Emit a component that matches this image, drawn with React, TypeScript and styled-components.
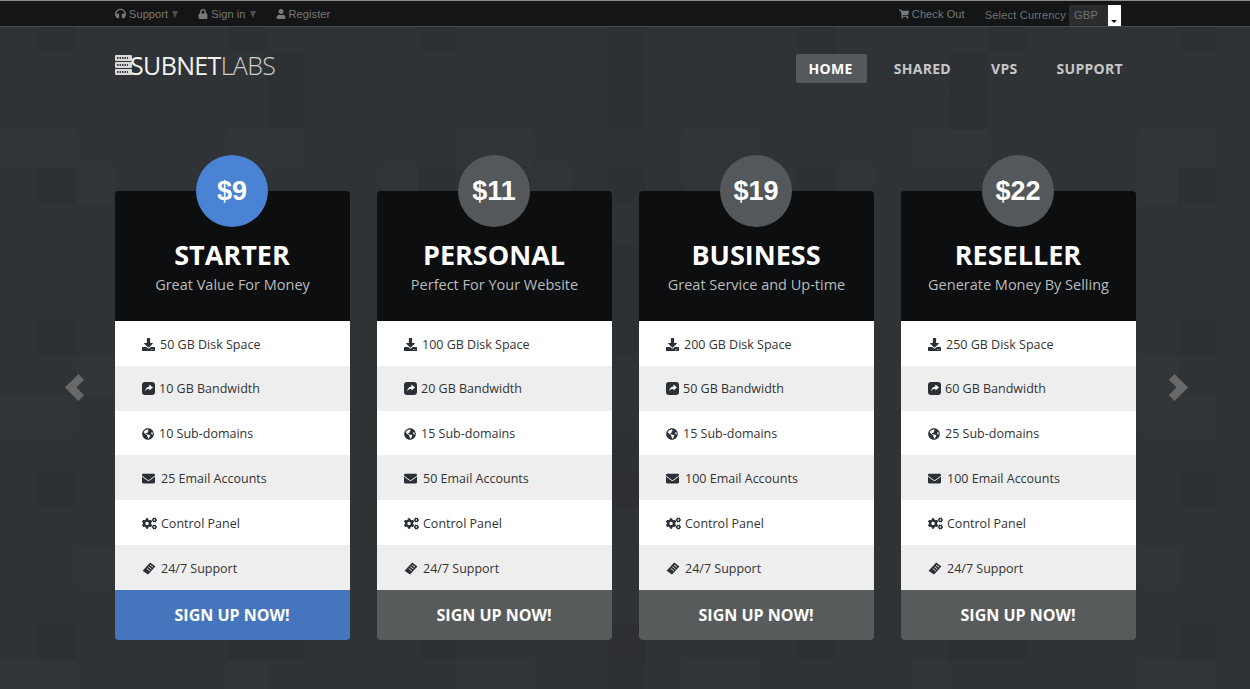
import styled, { createGlobalStyle } from 'styled-components';
import { FaCogs, FaDownload, FaEnvelope, FaGlobeAmericas, FaHeadphones, FaLock, FaShoppingCart, FaUser } from 'react-icons/fa';

const GlobalStyle = createGlobalStyle`
    html, body {
        margin: 0;
        padding: 0;
        height: 100%;
        background: #303336;
    }
    body {
        font-family: "Open Sans", sans-serif;
        overflow: hidden;
    }
`

const plans = [
    { price: '$9', name: 'STARTER', tag: 'Great Value For Money', disk: 50, band: 10, subs: 10, mail: 25, active: true },
    { price: '$11', name: 'PERSONAL', tag: 'Perfect For Your Website', disk: 100, band: 20, subs: 15, mail: 50 },
    { price: '$19', name: 'BUSINESS', tag: 'Great Service and Up-time', disk: 200, band: 50, subs: 15, mail: 100 },
    { price: '$22', name: 'RESELLER', tag: 'Generate Money By Selling', disk: 250, band: 60, subs: 25, mail: 100 },
]

function ServerLogo() {
    return (
        <svg width="17" height="20" viewBox="0 0 17 20" fill="none">
            {[0, 7, 14].map(y => (
                <g key={y}>
                    <rect x="0" y={y} width="17" height="6" rx="1" fill="#d8d8d8" />
                    <path d={`M2 ${y + 3}h11`} stroke="#3a3c3f" strokeWidth="2" strokeDasharray="1.5 1" />
                </g>
            ))}
        </svg>
    )
}

function BandwidthIcon() {
    return (
        <svg width="13" height="13" viewBox="0 0 13 13">
            <rect width="13" height="13" rx="3" fill="#2b2f36" />
            <path d="M7.4 2.6 11 5.6 7.4 8.6V6.8C5.6 6.8 4.3 7.4 3.2 9.4 3.3 6.6 5 4.6 7.4 4.4Z" fill="#fff" />
        </svg>
    )
}

function TicketIcon() {
    return (
        <svg width="14" height="13" viewBox="0 0 14 13">
            <path d="M8.2 0.6 13.4 4.4 6 12.6 0.6 8.8Z" fill="#2b2f36" />
            <path d="M8 3 11 5.2M6.4 4.8 9.4 7M4.8 6.6 7.8 8.8" stroke="#eeeeee" strokeWidth=".9" />
        </svg>
    )
}

export default function App() {
    return (
        <Page>
            <GlobalStyle />
            <TopBar>
                <TopInner>
                    <TopGroup>
                        <TopLink><FaHeadphones size={11} /> Support <Caret /></TopLink>
                        <TopLink><FaLock size={10} /> Sign in <Caret /></TopLink>
                        <TopLink><FaUser size={10} /> Register</TopLink>
                    </TopGroup>
                    <TopGroup>
                        <TopLink><FaShoppingCart size={10} /> Check Out</TopLink>
                        <Currency>
                            Select Currency
                            <CurrencyBox>GBP<CurrencyArrow /></CurrencyBox>
                        </Currency>
                    </TopGroup>
                </TopInner>
            </TopBar>
            <Header>
                <Logo>
                    <ServerLogo />
                    <LogoText>SUBNET<span>LABS</span></LogoText>
                </Logo>
                <Nav>
                    <NavItem $active>HOME</NavItem>
                    <NavItem>SHARED</NavItem>
                    <NavItem>VPS</NavItem>
                    <NavItem>SUPPORT</NavItem>
                </Nav>
            </Header>
            <Slider>
                <Arrow $side="left" />
                <Arrow $side="right" />
                {plans.map(plan => (
                    <Card key={plan.name}>
                        <Price $active={plan.active}>{plan.price}</Price>
                        <CardHead>
                            <PlanName>{plan.name}</PlanName>
                            <PlanTag>{plan.tag}</PlanTag>
                        </CardHead>
                        <Features>
                            <Feature><IconSlot $w={18}><FaDownload size={13} /></IconSlot>{plan.disk} GB Disk Space</Feature>
                            <Feature><IconSlot $w={17}><BandwidthIcon /></IconSlot>{plan.band} GB Bandwidth</Feature>
                            <Feature><IconSlot $w={17}><FaGlobeAmericas size={12} /></IconSlot>{plan.subs} Sub-domains</Feature>
                            <Feature><IconSlot $w={19}><FaEnvelope size={13} /></IconSlot>{plan.mail} Email Accounts</Feature>
                            <Feature><IconSlot $w={19}><FaCogs size={15} /></IconSlot>Control Panel</Feature>
                            <Feature><IconSlot $w={19}><TicketIcon /></IconSlot>24/7 Support</Feature>
                        </Features>
                        <SignUp $active={plan.active}>SIGN UP NOW!</SignUp>
                    </Card>
                ))}
            </Slider>
        </Page>
    )
}

const Page = styled.div`
    position: relative;
    height: 689px;
    overflow: hidden;
    background-color: #303336;
    background-image:
        conic-gradient(at 38px 38px, transparent 75%, rgba(0, 0, 0, .03) 0),
        conic-gradient(at 38px 38px, transparent 75%, rgba(0, 0, 0, .025) 0),
        conic-gradient(at 38px 76px, transparent 75%, rgba(0, 0, 0, .03) 0),
        conic-gradient(at 76px 38px, transparent 75%, rgba(255, 255, 255, .007) 0),
        conic-gradient(at 38px 38px, transparent 75%, rgba(255, 255, 255, .008) 0);
    background-size: 190px 152px, 266px 228px, 342px 190px, 228px 266px, 152px 190px;
    background-position: 38px 15px, 152px 91px, 266px 53px, 0 129px, 76px 167px;
`

const TopBar = styled.div`
    height: 25px;
    background: #141516;
    border-top: 1px solid #8a8a8a;
    border-bottom: 1px solid #4a4c4e;
    font-family: "Liberation Sans", Arial, sans-serif;
    font-size: 11px;
    color: #6f7172;
`

const TopInner = styled.div`
    width: 1006px;
    height: 100%;
    margin-left: 115px;
    display: flex;
    justify-content: space-between;
    align-items: center;
`

const TopGroup = styled.div`
    display: flex;
    align-items: center;
    gap: 19px;
`

const TopLink = styled.span`
    display: inline-flex;
    align-items: center;
    gap: 3px;
    margin-right: 1px;
    letter-spacing: .1px;
    color: #77797a;
`

const Caret = styled.i`
    width: 0;
    height: 0;
    margin: 2px 0 0 1px;
    border-style: solid;
    border-width: 7px 3px 0;
    border-color: #4c4e50 transparent transparent;
`

const Currency = styled.span`
    display: inline-flex;
    align-items: center;
    gap: 3px;
    margin-top: 3px;
    letter-spacing: .2px;
`

const CurrencyBox = styled.span`
    display: flex;
    justify-content: space-between;
    width: 52px;
    height: 21px;
    line-height: 21px;
    padding-left: 5px;
    box-sizing: border-box;
    background: #2b2c2e;
    letter-spacing: .3px;
`

const CurrencyArrow = styled.span`
    position: relative;
    width: 13px;
    height: 21px;
    background: #fff;
    &::after {
        content: "";
        position: absolute;
        left: 3px;
        bottom: 3px;
        border-style: solid;
        border-width: 3px 3px 0;
        border-color: #111 transparent transparent;
    }
`

const Header = styled.div`
    width: 1021px;
    margin-left: 115px;
    height: 73px;
    display: flex;
    justify-content: space-between;
    align-items: flex-start;
`

const Logo = styled.div`
    display: flex;
    align-items: center;
    margin-top: 24px;
    height: 28px;
`

const LogoText = styled.span`
    font-size: 25px;
    font-weight: 400;
    letter-spacing: -.65px;
    color: #f2f2f2;
    margin-left: -2px;
    span {
        font-weight: 300;
        color: #cfcfcf;
    }
`

const Nav = styled.nav`
    display: flex;
    align-items: center;
    gap: 14px;
    margin-top: 27px;
`

const NavItem = styled.a<{ $active?: boolean }>`
    height: 29px;
    line-height: 30px;
    padding: 0 ${p => (p.$active ? '14px' : '13px')} 0 13px;
    font-size: 14px;
    font-weight: 700;
    letter-spacing: .3px;
    border-radius: 2px;
    color: ${p => (p.$active ? '#ffffff' : '#c6c7c8')};
    background: ${p => (p.$active ? '#56595c' : 'transparent')};
    &:last-child {
        margin-left: -1px;
    }
`

const Slider = styled.div`
    position: relative;
    margin: 91px 0 0 115px;
    display: flex;
    gap: 27px;
`

const Arrow = styled.span<{ $side: 'left' | 'right' }>`
    position: absolute;
    top: 187px;
    left: ${p => (p.$side === 'left' ? '-46px' : '1050px')};
    width: 19px;
    height: 19px;
    box-sizing: border-box;
    transform: rotate(45deg);
    border-color: #66686a;
    border-style: solid;
    border-width: ${p => (p.$side === 'left' ? '0 0 8px 8px' : '8px 8px 0 0')};
`

const Card = styled.div`
    position: relative;
    width: 235px;
    height: 449px;
    border-radius: 4px;
    display: flex;
    flex-direction: column;
`

const Price = styled.div<{ $active?: boolean }>`
    position: absolute;
    top: -36px;
    left: 81px;
    width: 72px;
    height: 72px;
    border-radius: 50%;
    background: ${p => (p.$active ? '#4a83d4' : '#55585a')};
    color: #fff;
    font-family: "Liberation Sans", Arial, sans-serif;
    font-size: 27px;
    font-weight: 700;
    line-height: 72px;
    text-align: center;
`

const CardHead = styled.div`
    height: 130px;
    flex: none;
    box-sizing: border-box;
    padding-top: 45px;
    background: #0c0e0f;
    border-radius: 4px 4px 0 0;
    text-align: center;
`

const PlanName = styled.h2`
    margin: 0;
    padding-right: 1px;
    font-size: 27px;
    line-height: 38px;
    font-weight: 700;
    color: #fff;
`

const PlanTag = styled.p`
    margin: 1px 0 0;
    font-size: 14.5px;
    line-height: 20px;
    color: #b9bcbe;
`

const Features = styled.ul`
    list-style: none;
    margin: 0;
    padding: 0;
    flex: 1;
    display: grid;
    grid-template-rows: repeat(6, 1fr);
    background: #fff;
`

const Feature = styled.li`
    display: flex;
    align-items: center;
    padding: 1px 0 0 27px;
    font-size: 12.5px;
    color: #333;
    &:first-child {
        padding-top: 2px;
    }
    &:nth-child(even) {
        background: #eeeeee;
    }
`

const IconSlot = styled.span<{ $w: number }>`
    flex: none;
    width: ${p => p.$w}px;
    display: flex;
    align-items: center;
    color: #2b2f36;
`

const SignUp = styled.a<{ $active?: boolean }>`
    height: 50px;
    flex: none;
    box-sizing: border-box;
    padding-right: 1px;
    line-height: 50px;
    text-align: center;
    font-size: 16px;
    font-weight: 700;
    color: #fff;
    border-radius: 0 0 4px 4px;
    background: ${p => (p.$active ? '#4576bd' : '#585b5c')};
`
